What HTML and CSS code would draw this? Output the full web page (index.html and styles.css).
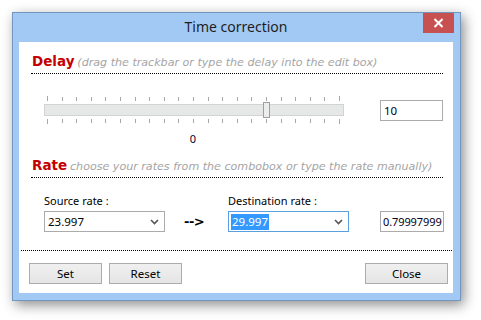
FILE: index.html
```html
<!DOCTYPE html>
<html>
<head>
<meta charset="utf-8">
<link rel="stylesheet" href="styles.css">
</head>
<body>
<div class="window">
  <div class="titlebar">
    <span class="title">Time correction</span>
    <div class="close"><svg width="11" height="10" viewBox="0 0 11 10"><path d="M1.5 1 L9.5 9 M9.5 1 L1.5 9" stroke="#fff" stroke-width="2" fill="none"/></svg></div>
  </div>
  <div class="client">
    <div class="section-head"><span class="head">Delay</span> <span class="hint">(drag the trackbar or type the delay into the edit box)</span></div>
    <div class="delay-row">
      <div class="trackbar">
        <svg class="ticks" width="300" height="8" viewBox="0 0 300 8">
          <g stroke="#a8a8a8" stroke-width="1">
            <line x1="3.5" y1="0" x2="3.5" y2="5"/><line x1="18.5" y1="1" x2="18.5" y2="5"/><line x1="32.5" y1="1" x2="32.5" y2="5"/><line x1="47.5" y1="1" x2="47.5" y2="5"/><line x1="61.5" y1="1" x2="61.5" y2="5"/><line x1="76.5" y1="1" x2="76.5" y2="5"/><line x1="91.5" y1="1" x2="91.5" y2="5"/><line x1="105.5" y1="1" x2="105.5" y2="5"/><line x1="120.5" y1="1" x2="120.5" y2="5"/><line x1="134.5" y1="1" x2="134.5" y2="5"/><line x1="149.5" y1="1" x2="149.5" y2="5"/><line x1="164.5" y1="1" x2="164.5" y2="5"/><line x1="178.5" y1="1" x2="178.5" y2="5"/><line x1="193.5" y1="1" x2="193.5" y2="5"/><line x1="207.5" y1="1" x2="207.5" y2="5"/><line x1="222.5" y1="1" x2="222.5" y2="5"/><line x1="237.5" y1="1" x2="237.5" y2="5"/><line x1="251.5" y1="1" x2="251.5" y2="5"/><line x1="266.5" y1="1" x2="266.5" y2="5"/><line x1="280.5" y1="1" x2="280.5" y2="5"/><line x1="295.5" y1="0" x2="295.5" y2="5"/>
          </g>
        </svg>
        <div class="bar"><div class="thumb"></div></div>
        <svg class="ticks" width="300" height="8" viewBox="0 0 300 8">
          <g stroke="#a8a8a8" stroke-width="1">
            <line x1="3.5" y1="3" x2="3.5" y2="8"/><line x1="18.5" y1="3" x2="18.5" y2="7"/><line x1="32.5" y1="3" x2="32.5" y2="7"/><line x1="47.5" y1="3" x2="47.5" y2="7"/><line x1="61.5" y1="3" x2="61.5" y2="7"/><line x1="76.5" y1="3" x2="76.5" y2="7"/><line x1="91.5" y1="3" x2="91.5" y2="7"/><line x1="105.5" y1="3" x2="105.5" y2="7"/><line x1="120.5" y1="3" x2="120.5" y2="7"/><line x1="134.5" y1="3" x2="134.5" y2="7"/><line x1="149.5" y1="3" x2="149.5" y2="7"/><line x1="164.5" y1="3" x2="164.5" y2="7"/><line x1="178.5" y1="3" x2="178.5" y2="7"/><line x1="193.5" y1="3" x2="193.5" y2="7"/><line x1="207.5" y1="3" x2="207.5" y2="7"/><line x1="222.5" y1="3" x2="222.5" y2="7"/><line x1="237.5" y1="3" x2="237.5" y2="7"/><line x1="251.5" y1="3" x2="251.5" y2="7"/><line x1="266.5" y1="3" x2="266.5" y2="7"/><line x1="280.5" y1="3" x2="280.5" y2="7"/><line x1="295.5" y1="3" x2="295.5" y2="8"/>
          </g>
        </svg>
        <div class="track-label">0</div>
      </div>
      <div class="edit delay-edit">10</div>
    </div>
    <div class="section-head"><span class="head">Rate</span> <span class="hint">choose your rates from the combobox or type the rate manually)</span></div>
    <div class="rate-row">
      <div class="field">
        <div class="label">Source rate :</div>
        <div class="combo"><span class="value">23.997</span><svg class="chev" width="9" height="6" viewBox="0 0 9 6"><path d="M1 1 L4.5 4.5 L8 1" stroke="#555" stroke-width="1.6" fill="none"/></svg></div>
      </div>
      <div class="arrow">--&gt;</div>
      <div class="field dest">
        <div class="label">Destination rate :</div>
        <div class="combo focus"><span class="value sel">29.997</span><svg class="chev" width="9" height="6" viewBox="0 0 9 6"><path d="M1 1 L4.5 4.5 L8 1" stroke="#555" stroke-width="1.6" fill="none"/></svg></div>
      </div>
      <div class="edit out">0.79997999</div>
    </div>
    <div class="separator"></div>
    <div class="buttons">
      <div class="btn">Set</div>
      <div class="btn">Reset</div>
      <div class="spacer"></div>
      <div class="btn wide">Close</div>
    </div>
  </div>
</div>
</body>
</html>
```

FILE: styles.css
```css
* { box-sizing: border-box; }
html, body { margin: 0; padding: 0; background: #fff; }
body { width: 481px; height: 320px; overflow: hidden; font-family: "Noto Sans", "Open Sans", sans-serif; font-size: 11px; color: #000; }

.window {
  margin: 12px 0 0 12px;
  width: 449px;
  height: 289px;
  background: #a2c9f3;
  border: 1px solid #7396bf;
  box-shadow: 3px 4px 12px rgba(0,0,0,0.45);
  display: flex;
  flex-direction: column;
  padding: 0 7px 7px 6px;
}
.titlebar {
  height: 29px;
  display: flex;
  align-items: flex-start;
  justify-content: center;
  position: relative;
}
.title {
  font-family: "Noto Sans", sans-serif;
  font-size: 14px;
  line-height: 29px;
  color: #1e1e1e;
  margin-top: -1px;
}
.close {
  position: absolute;
  right: -1px;
  top: 0;
  width: 31px;
  height: 20px;
  background: #c75050;
  display: flex;
  align-items: center;
  justify-content: center;
}
.client {
  flex: 1;
  background: #fff;
  display: flex;
  flex-direction: column;
  padding-bottom: 7px;
}
.section-head {
  margin: 0 10px 0 12px;
  padding: 9px 0 2px 1px;
  height: 32px;
  line-height: 20px;
  border-bottom: 1px dotted #000;
  white-space: nowrap;
}
.head {
  font-family: "DejaVu Sans", sans-serif;
  font-weight: bold;
  font-size: 13.5px;
  color: #c40000;
}
.hint {
  font-family: "DejaVu Sans", sans-serif;
  font-style: italic;
  font-size: 11.1px;
  color: #a4a4a4;
}
.delay-row {
  height: 72px;
  padding: 22px 10px 0 25px;
  display: flex;
  justify-content: space-between;
  align-items: flex-start;
}
.trackbar { width: 300px; display: flex; flex-direction: column; }
.ticks { display: block; }
.bar {
  width: 300px;
  height: 12px;
  background: #e6e8e8;
  border: 1px solid #d3d3d3;
  position: relative;
}
.thumb {
  position: absolute;
  left: 218px;
  top: -3px;
  width: 7px;
  height: 16px;
  background: #ececec;
  border: 1px solid #9e9e9e;
}
.track-label {
  text-align: center;
  margin-top: 8px;
  line-height: 14px;
  font-size: 11px;
  color: #000030;
  padding-right: 2px;
}
.edit {
  height: 21px;
  border: 1px solid #ababab;
  line-height: 19px;
  padding-left: 3px;
  font-size: 11.5px;
  color: #000020;
  background: #fff;
}
.delay-edit { width: 63px; margin-top: 4px; }
.rate-row {
  margin-top: 15px;
  padding-left: 25px;
  display: flex;
  align-items: flex-end;
  height: 39px;
}
.field { display: flex; flex-direction: column; gap: 2px; }
.label { line-height: 16px; font-size: 11px; color: #000; white-space: nowrap; }
.combo {
  width: 121px;
  height: 21px;
  border: 1px solid #ababab;
  display: flex;
  align-items: center;
  justify-content: space-between;
  padding: 0 5px 0 2px;
  font-size: 11.5px;
}
.combo.focus { border-color: #5a9fe0; }
.value { line-height: 16px; padding: 0 1px; }
.sel { background: #3399ff; color: #fff; }
.chev { display: block; }
.arrow {
  width: 22px;
  margin-left: 19px;
  height: 21px;
  line-height: 21px;
  font-family: "DejaVu Sans", sans-serif;
  font-weight: bold;
  font-size: 13px;
  color: #000;
  white-space: nowrap;
  letter-spacing: -0.5px;
}
.dest { margin-left: 22px; }
.out { width: 64px; margin-left: 31px; padding-left: 2px; font-size: 11px; letter-spacing: -0.1px; }
.separator {
  margin: 18px 1px 0 2px;
  border-top: 1px dotted #000;
  height: 1px;
}
.buttons {
  margin-top: 12px;
  padding: 0 5px 0 10px;
  display: flex;
  gap: 7px;
}
.spacer { flex: 1; }
.btn {
  width: 73px;
  height: 21px;
  border: 1px solid #acacac;
  background: linear-gradient(#f0f0f0, #e5e5e5);
  text-align: center;
  line-height: 19px;
  font-size: 11.5px;
  color: #000;
}
.btn.wide { width: 83px; }
```
